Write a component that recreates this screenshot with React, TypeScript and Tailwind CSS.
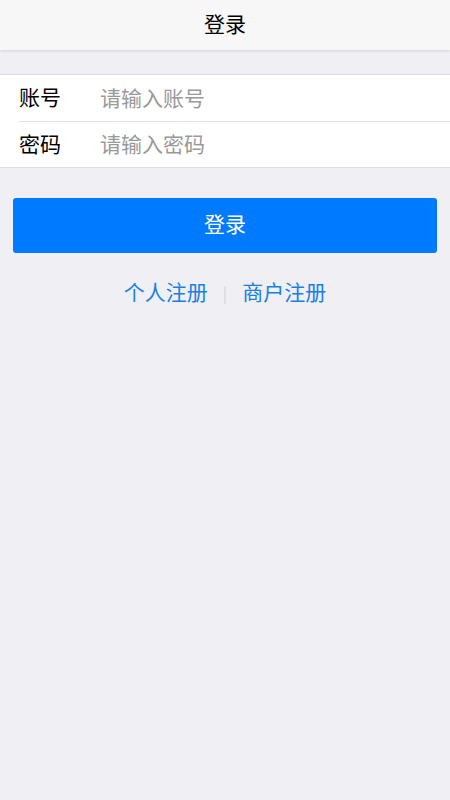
import React, { useState } from 'react';

const font = { fontFamily: '"Noto Sans CJK SC", "Liberation Sans", sans-serif' };

const LoginPage = () => {
  const [account, setAccount] = useState('');
  const [password, setPassword] = useState('');

  return (
    <div className="min-h-[800px] w-full bg-[#efeff4]" style={font}>
      <header className="flex h-[50px] items-center justify-center bg-[#f7f7f7] pb-[4px] shadow-[0_1px_3px_rgba(0,0,0,0.12)]">
        <h1 className="text-[21px] font-normal leading-none text-black">登录</h1>
      </header>

      <div className="mt-[24px] border-y border-[#dcdcdf] bg-white">
        <label className="flex h-[46px] items-center pb-[3px] pl-[19px]">
          <span className="w-[81px] text-[21px] leading-none text-black">账号</span>
          <input
            className="flex-1 bg-transparent text-[21px] leading-none text-black outline-none placeholder:text-[#999999]"
            placeholder="请输入账号"
            value={account}
            onChange={e => setAccount(e.target.value)}
          />
        </label>
        <div className="ml-[19px] h-px bg-[#e2e2e4]" />
        <label className="flex h-[45px] items-center pb-[3px] pl-[19px]">
          <span className="w-[81px] text-[21px] leading-none text-black">密码</span>
          <input
            type="password"
            className="flex-1 bg-transparent text-[21px] leading-none text-black outline-none placeholder:text-[#999999]"
            placeholder="请输入密码"
            value={password}
            onChange={e => setPassword(e.target.value)}
          />
        </label>
      </div>

      <div className="px-[13px] pt-[30px]">
        <button
          type="button"
          className="flex h-[55px] w-full items-center justify-center rounded-[3px] bg-[#007aff] pb-[4px] text-[21px] leading-none text-white"
        >
          登录
        </button>
      </div>

      <div className="mt-[28px] flex items-center justify-center text-[21px] leading-none text-[#1a7fe5]">
        <a href="#">个人注册</a>
        <span className="mx-[15px] text-[16px] text-[#d4d4d8]">|</span>
        <a href="#">商户注册</a>
      </div>
    </div>
  );
};

export default function App() {
  return <LoginPage />;
}
